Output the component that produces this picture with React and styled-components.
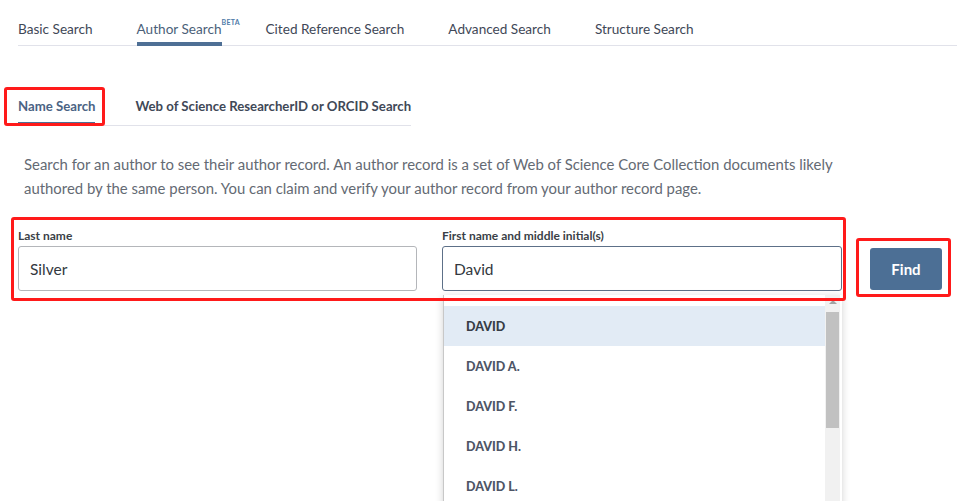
import React from 'react';
import styled, { createGlobalStyle } from 'styled-components';

const GlobalStyle = createGlobalStyle`
body {
  margin: 0;
  background: #fff;
  font-family: Lato, "Open Sans", sans-serif;
  overflow: hidden;
}
* { box-sizing: border-box; }
`

const Page = styled.div`
width: 957px;
height: 501px;
position: relative;
overflow: hidden;
padding-left: 18px;
`

const TopTabs = styled.div`
display: flex;
gap: 44px;
padding-top: 19px;
border-bottom: 1px solid #e1e2ea;
`

const TopTab = styled.div`
position: relative;
font-size: 13.6px;
color: ${props => props.active ? '#4b5f79' : '#3f4857'};
height: 27px;
line-height: 20px;
border-bottom: 4px solid ${props => props.active ? '#4e6f95' : 'transparent'};
margin-bottom: -1px;
white-space: nowrap;
`

const Beta = styled.span`
position: absolute;
left: 100%;
top: -7px;
font-size: 7px;
font-weight: 700;
color: #4e7aa8;
letter-spacing: 0.3px;
`

const SubTabs = styled.div`
display: inline-flex;
gap: 40px;
margin-top: 49px;
border-bottom: 1px solid #e1e2ea;
`

const SubTab = styled.div`
position: relative;
font-size: 13.2px;
font-weight: 700;
color: ${props => props.active ? '#4b6384' : '#3f4857'};
height: 31px;
line-height: 22px;
border-bottom: 4px solid ${props => props.active ? '#4e6f95' : 'transparent'};
margin-bottom: -1px;
white-space: nowrap;

${props => props.marked && `
&::after {
  content: '';
  position: absolute;
  left: -14px;
  right: -10px;
  top: -8px;
  bottom: -4px;
  border: 3px solid #ff1a1a;
  border-radius: 3px;
}`}
`

const Intro = styled.p`
margin: 26px 0 0 6px;
width: 830px;
font-size: 14.9px;
line-height: 24px;
color: #646a73;
`

const FormRow = styled.div`
display: flex;
align-items: flex-end;
margin-top: 28px;
gap: 28px;
`

const Fields = styled.div`
position: relative;
display: flex;
gap: 25px;

&::after {
  content: '';
  position: absolute;
  left: -7px;
  right: -4px;
  top: -11px;
  bottom: -10px;
  border: 3px solid #ff1a1a;
  border-radius: 3px;
  pointer-events: none;
}
`

const Field = styled.div`
position: relative;
display: flex;
flex-direction: column;
width: ${props => props.w}px;
`

const Label = styled.label`
font-size: 12px;
font-weight: 700;
color: #3a3f47;
height: 18px;
line-height: 16px;
`

const Input = styled.div`
height: 45px;
border: 1px solid ${props => props.focus ? '#5d7088' : '#b4b6ba'};
border-radius: 3px;
padding-left: 11px;
display: flex;
align-items: center;
font-size: 15.5px;
color: #333840;
`

const FindWrap = styled.div`
position: relative;
margin-bottom: 1px;

&::after {
  content: '';
  position: absolute;
  left: -14px;
  right: -9px;
  top: -10px;
  bottom: -7px;
  border: 3px solid #ff1a1a;
  border-radius: 3px;
}
`

const FindButton = styled.button`
width: 72px;
height: 42px;
border: none;
border-radius: 3px;
background: #4c6f95;
color: #fff;
font-family: inherit;
font-size: 15px;
font-weight: 700;
`

const Dropdown = styled.div`
position: absolute;
top: 67px;
left: 1px;
right: 0;
height: 240px;
background: #fff;
border-left: 1px solid #c8c8c8;
box-shadow: 0 2px 8px rgba(0,0,0,0.18);
display: flex;
`

const Options = styled.ul`
flex: 1;
list-style: none;
margin: 0;
padding: 11px 0 0;
`

const Option = styled.li`
height: 40px;
display: flex;
align-items: center;
padding-left: 22px;
font-size: 12.5px;
font-weight: 900;
color: ${props => props.active ? '#363c46' : '#4d5566'};
background: ${props => props.active ? '#e2ebf5' : 'transparent'};
`

const Scrollbar = styled.div`
width: 15px;
margin-right: 2px;
background: #f1f1f1;
display: flex;
flex-direction: column;
align-items: center;
`

const ArrowUp = styled.div`
width: 0;
height: 0;
margin-top: 5px;
border-left: 4px solid transparent;
border-right: 4px solid transparent;
border-bottom: 4px solid #a3a3a3;
`

const Thumb = styled.div`
width: 13px;
height: 116px;
margin-top: 8px;
background: #c1c1c1;
`

const names = ['DAVID', 'DAVID A.', 'DAVID F.', 'DAVID H.', 'DAVID L.'];

const App = () => {
  return (
    <Page>
      <GlobalStyle />
      <TopTabs>
        <TopTab>Basic Search</TopTab>
        <TopTab active>Author Search<Beta>BETA</Beta></TopTab>
        <TopTab>Cited Reference Search</TopTab>
        <TopTab>Advanced Search</TopTab>
        <TopTab>Structure Search</TopTab>
      </TopTabs>

      <SubTabs>
        <SubTab active marked>Name Search</SubTab>
        <SubTab>Web of Science ResearcherID or ORCID Search</SubTab>
      </SubTabs>

      <Intro>
        Search for an author to see their author record. An author record is a set of Web of Science Core Collection documents likely
        authored by the same person. You can claim and verify your author record from your author record page.
      </Intro>

      <FormRow>
        <Fields>
          <Field w={399}>
            <Label>Last name</Label>
            <Input>Silver</Input>
          </Field>
          <Field w={400}>
            <Label>First name and middle initial(s)</Label>
            <Input focus>David</Input>
            <Dropdown>
              <Options>
                {names.map((n, i) => (
                  <Option key={n} active={i === 0}>{n}</Option>
                ))}
              </Options>
              <Scrollbar>
                <ArrowUp />
                <Thumb />
              </Scrollbar>
            </Dropdown>
          </Field>
        </Fields>
        <FindWrap>
          <FindButton>Find</FindButton>
        </FindWrap>
      </FormRow>
    </Page>
  );
};

export default App;
